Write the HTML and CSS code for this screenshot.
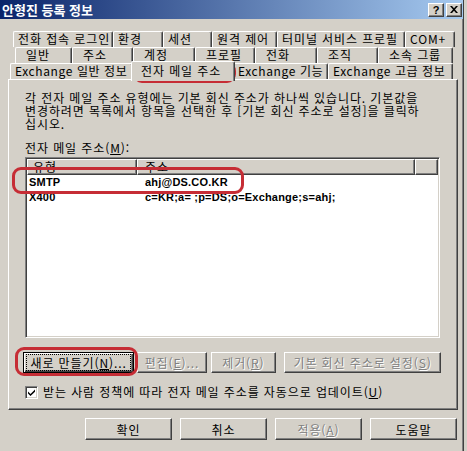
FILE: index.html
```html
<!doctype html>
<html lang="ko">
    <head>
        <meta charset="utf-8">
        <title>안형진 등록 정보</title>
        <meta name="viewport" content="width=device-width, initial-scale=1">
        <link rel="stylesheet" href="styles.css">
    </head>
    <body>
        <div class="window">
            <div class="titlebar">
                <div class="title">안형진 등록 정보</div>
                <div class="capbtn help">?</div>
                <div class="capbtn close">
                    <svg width="8" height="7" viewBox="0 0 8 7"><path d="M0 0h2l2 2.2L6 0h2L5 3.5 8 7H6L4 4.8 2 7H0l3-3.5z" fill="#000"/></svg>
                </div>
            </div>

            <div class="tabs">
                <div class="tab-row row-1">
                    <div class="tab" style="width:100px">전화 접속 로그인</div>
                    <div class="tab" style="width:50px">환경</div>
                    <div class="tab" style="width:49px">세션</div>
                    <div class="tab" style="width:65px">원격 제어</div>
                    <div class="tab" style="width:128px">터미널 서비스 프로필</div>
                    <div class="tab" style="width:50px">COM+</div>
                </div>
                <div class="tab-row row-2">
                    <div class="tab" style="width:57px">일반</div>
                    <div class="tab" style="width:61px">주소</div>
                    <div class="tab" style="width:62px">계정</div>
                    <div class="tab" style="width:60px">프로필</div>
                    <div class="tab" style="width:62px">전화</div>
                    <div class="tab" style="width:61px">조직</div>
                    <div class="tab" style="width:75px">소속 그룹</div>
                </div>
                <div class="tab-row row-3">
                    <div class="tab" style="width:123px">Exchange 일반 정보</div>
                    <div class="tab active" style="width:104px">전자 메일 주소</div>
                    <div class="tab" style="width:95px">Exchange 기능</div>
                    <div class="tab" style="width:125px">Exchange 고급 정보</div>
                </div>
            </div>

            <div class="panel">
                <div class="desc">
                    <div class="desc-line">각 전자 메일 주소 유형에는 기본 회신 주소가 하나씩 있습니다. 기본값을</div>
                    <div class="desc-line">변경하려면 목록에서 항목을 선택한 후 [기본 회신 주소로 설정]을 클릭하</div>
                    <div class="desc-line">십시오.</div>
                </div>
                <div class="label">전자 메일 주소(<u>M</u>):</div>
                <div class="list">
                    <div class="list-head">
                        <div class="col col-type">유형</div>
                        <div class="col col-addr">주소</div>
                        <div class="col col-rest"></div>
                    </div>
                    <div class="list-row">
                        <div class="cell cell-type">SMTP</div>
                        <div class="cell cell-addr">ahj@DS.CO.KR</div>
                    </div>
                    <div class="list-row">
                        <div class="cell cell-type">X400</div>
                        <div class="cell cell-addr">c=KR;a= ;p=DS;o=Exchange;s=ahj;</div>
                    </div>
                </div>
                <div class="actions">
                    <div class="btn default new"><span class="focus">새로 만들기(<u>N</u>)...</span></div>
                    <div class="btn disabled edit">편집(<u>E</u>)...</div>
                    <div class="btn disabled remove">제거(<u>R</u>)</div>
                    <div class="btn disabled primary">기본 회신 주소로 설정(<u>S</u>)</div>
                </div>
                <div class="check-line">
                    <div class="checkbox">
                        <svg width="7" height="7" viewBox="0 0 7 7"><path d="M0 2.5l2.5 2.5L7 0.5V2.7L2.5 7 0 4.6z" fill="#000"/></svg>
                    </div>
                    <span>받는 사람 정책에 따라 전자 메일 주소를 자동으로 업데이트(<u>U</u>)</span>
                </div>
            </div>

            <div class="footer">
                <div class="btn">확인</div>
                <div class="btn">취소</div>
                <div class="btn disabled">적용(<u>A</u>)</div>
                <div class="btn">도움말</div>
            </div>

            <!-- red highlight marks over the screenshot -->
            <div class="mark mark-tab"></div>
            <div class="mark mark-row"></div>
            <div class="mark mark-btn"></div>
        </div>
    </body>
</html>
```

FILE: styles.css
```css
html, body {
    margin: 0;
    padding: 0;
}
body {
    background: #D4D0C8;
    font-family: "Noto Sans CJK KR", "Liberation Sans", sans-serif;
    font-size: 12px;
    letter-spacing: 0.9px;
    color: #000;
    width: 467px;
    height: 451px;
    overflow: hidden;
}
u {
    text-decoration: underline;
}

.window {
    position: relative;
    height: 451px;
    box-shadow: inset -3px 0 #D4D0C8, inset -4px 0 #404040, inset -5px 0 #808080;
}

/* caption */
.titlebar {
    height: 19px;
    margin-right: 4px;
    display: flex;
    align-items: center;
    background: linear-gradient(to right, #0A246A, #A6CAF0);
    padding-left: 2px;
}
.title {
    flex: 1;
    color: #fff;
    font-weight: bold;
    font-size: 13px;
    letter-spacing: 0;
    line-height: 19px;
}
.capbtn {
    box-sizing: border-box;
    width: 16px;
    height: 14px;
    background: #D4D0C8;
    border: 1px solid;
    border-color: #fff #404040 #404040 #fff;
    box-shadow: inset -1px -1px #808080;
    display: flex;
    align-items: center;
    justify-content: center;
    font-family: "Liberation Sans", sans-serif;
    font-weight: bold;
    font-size: 11px;
    letter-spacing: 0;
    line-height: 12px;
}
.capbtn.close {
    margin-left: 2px;
    margin-right: 1px;
}

/* tabs */
.tabs {
    padding-top: 12px;
}
.tab-row {
    display: flex;
    height: 16px;
    align-items: flex-start;
}
.row-1 { margin-left: 13px; }
.row-2 { margin-left: 15px; }
.row-3 { margin-left: 10px; letter-spacing: 0.6px; }
.tab {
    box-sizing: border-box;
    height: 16px;
    border-top: 1px solid #fff;
    border-left: 1px solid #fff;
    border-right: 1px solid #404040;
    border-radius: 2px 2px 0 0;
    box-shadow: inset -1px 0 #808080;
    padding-left: 4px;
    line-height: 14px;
    white-space: nowrap;
    overflow: hidden;
}
.row-2 .tab {
    padding-left: 10px;
}
.tab.active {
    position: relative;
    z-index: 1;
    height: 20px;
    margin: -2px -2px 0 -2px;
    padding-left: 9px;
    line-height: 17px;
    letter-spacing: 0.9px;
    background: #D4D0C8;
}

/* property page */
.panel {
    box-sizing: border-box;
    margin-left: 8px;
    width: 450px;
    height: 331px;
    border: 1px solid;
    border-color: #fff #404040 #404040 #fff;
    box-shadow: inset -1px -1px #808080;
    padding: 11px 16px 0 16px;
}
.desc-line {
    height: 13px;
    line-height: 13px;
    white-space: nowrap;
}
.label {
    margin-top: 11px;
    line-height: 13px;
}
.list {
    box-sizing: border-box;
    margin-top: 3px;
    width: 415px;
    height: 181px;
    background: #fff;
    border: 1px solid;
    border-color: #808080 #fff #fff #808080;
    box-shadow: inset 1px 1px #404040, inset -1px -1px #D4D0C8;
    padding: 1px;
}
.list-head {
    display: flex;
    height: 16px;
}
.col {
    box-sizing: border-box;
    height: 16px;
    background: #D4D0C8;
    border: 1px solid;
    border-color: #fff #404040 #404040 #fff;
    box-shadow: inset -1px -1px #808080;
    line-height: 13px;
    padding-left: 5px;
}
.col-type { width: 110px; }
.col-addr { width: 278px; padding-left: 7px; }
.col-rest { flex: 1; }
.list-row {
    display: flex;
    height: 15px;
    line-height: 15px;
    font-family: "Liberation Sans", sans-serif;
    font-weight: bold;
    font-size: 11px;
    letter-spacing: 0.2px;
}
.list-row:first-of-type {
    margin-top: 1px;
}
.cell-type {
    width: 114px;
    padding-left: 2px;
}
.cell-addr {
    padding-left: 2px;
}

/* buttons */
.btn {
    box-sizing: border-box;
    height: 21px;
    background: #D4D0C8;
    border: 1px solid;
    border-color: #fff #404040 #404040 #fff;
    box-shadow: inset -1px -1px #808080;
    display: flex;
    align-items: center;
    justify-content: center;
    white-space: nowrap;
}
.btn.disabled {
    color: #808080;
    text-shadow: 1px 1px #fff;
}
.btn.default {
    border-color: #000;
    box-shadow: inset 1px 1px #fff, inset -1px -1px #404040, inset -2px -2px #808080;
}
.focus {
    outline: 1px dotted #000;
    outline-offset: 1px;
    padding: 0 2px;
    line-height: 13px;
}
.actions {
    display: flex;
    margin: 14px 0 0 -2px;
    gap: 3px;
}
.actions .new { width: 112px; }
.actions .edit { width: 70px; }
.actions .remove { width: 66px; margin-left: 1px; }
.actions .primary { width: 158px; margin-left: 5px; }

.check-line {
    display: flex;
    align-items: center;
    margin-top: 12px;
    line-height: 14px;
}
.checkbox {
    box-sizing: border-box;
    width: 13px;
    height: 13px;
    margin-right: 5px;
    background: #fff;
    border: 1px solid;
    border-color: #808080 #fff #fff #808080;
    box-shadow: inset 1px 1px #404040, inset -1px -1px #D4D0C8;
    display: flex;
    align-items: center;
    justify-content: center;
}

.footer {
    display: flex;
    justify-content: flex-end;
    gap: 8px;
    margin-top: 8px;
    padding-right: 10px;
}
.footer .btn {
    width: 87px;
    height: 22px;
}

/* red highlight marks */
.mark {
    position: absolute;
    box-sizing: border-box;
    border: 3px solid #c62d35;
    border-radius: 9px;
}
.mark-tab {
    left: 133px;
    top: 62px;
    width: 103px;
    height: 21px;
}
.mark-row {
    left: 12px;
    top: 167px;
    width: 232px;
    height: 27px;
}
.mark-btn {
    left: 15px;
    top: 347px;
    width: 123px;
    height: 29px;
}
```
